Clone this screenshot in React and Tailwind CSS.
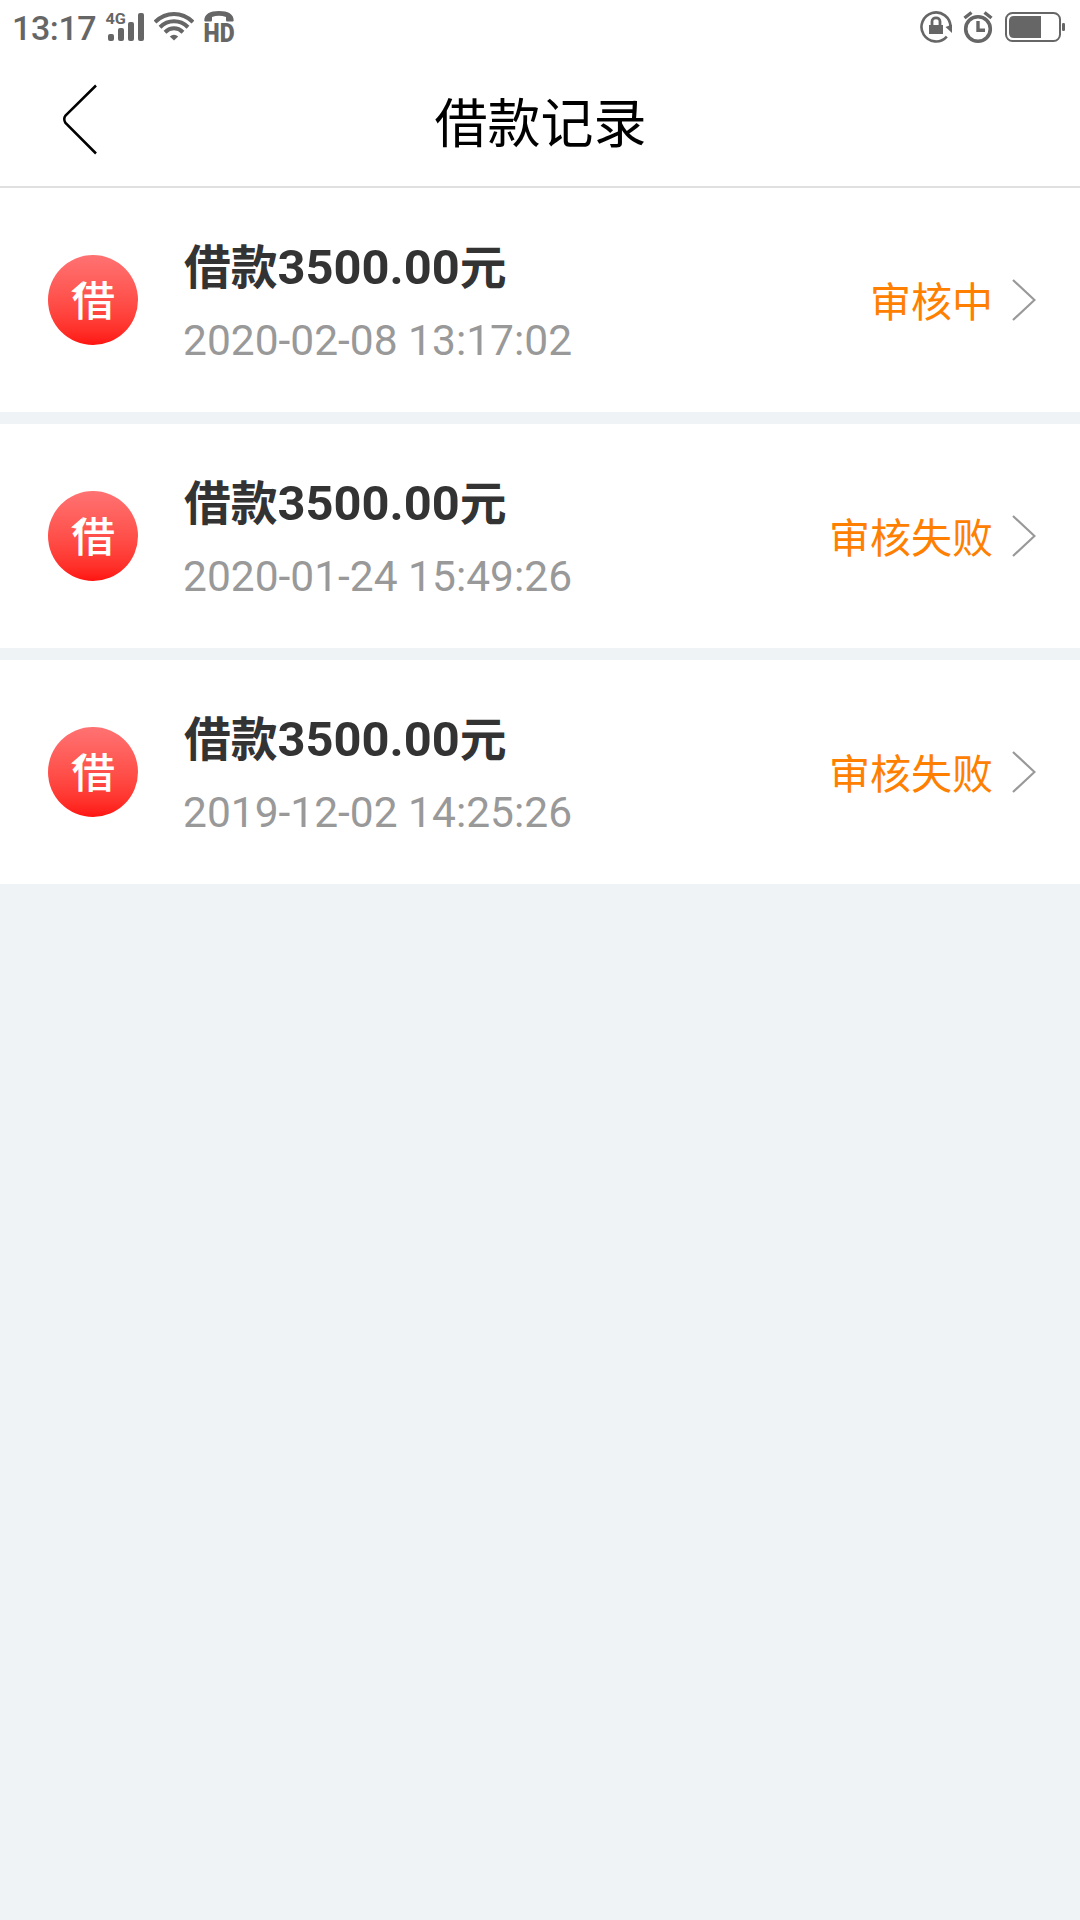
const records = [
  { id: 1, amount: '3500.00', time: '2020-02-08 13:17:02', status: '审核中' },
  { id: 2, amount: '3500.00', time: '2020-01-24 15:49:26', status: '审核失败' },
  { id: 3, amount: '3500.00', time: '2019-12-02 14:25:26', status: '审核失败' }
];

const SignalIcon = () => (
  <svg className="w-[40px] h-[54px]" viewBox="105 0 40 54" fill="currentColor">
    <text x="105.5" y="24" fontSize="15" fontWeight="700" textLength="20.5" lengthAdjust="spacingAndGlyphs">4G</text>
    <rect x="108" y="34" width="6" height="7" rx="2" />
    <rect x="118" y="28" width="6" height="13" rx="2" />
    <rect x="128" y="22" width="6" height="19" rx="2" />
    <rect x="138" y="13" width="6" height="28" rx="2" />
  </svg>
);

const WifiIcon = () => (
  <svg className="w-[40px] h-[54px]" viewBox="154 0 40 54" fill="none" stroke="currentColor" strokeWidth="4">
    <path d="M155 22 C166 11.2 182 11.2 193 22" />
    <path d="M160 27.2 C168 19.4 180 19.4 188 27.2" />
    <path d="M165 32.2 C170.5 27 177.5 27 183 32.2" />
    <path d="M169.8 36.6 Q174 33 178.2 36.6 L174 40.5Z" fill="currentColor" stroke="none" />
  </svg>
);

const HdCallIcon = () => (
  <svg className="w-[40px] h-[54px]" viewBox="200 0 40 54" fill="currentColor">
    <path d="M204.3 20.5 C204.3 14 210 11 219 11 C228 11 233.7 14 233.7 20.5 Q233.7 21.5 232.5 21.5 H227 Q226 21.5 226 20 V17 Q219 14.5 212 17 V20 Q212 21.5 211 21.5 H205.5 Q204.3 21.5 204.3 20.5Z" />
    <text x="203.6" y="42" fontSize="25" fontWeight="900" textLength="31" lengthAdjust="spacingAndGlyphs">HD</text>
  </svg>
);

const RotationLockIcon = () => (
  <svg className="w-[34px] h-[54px]" viewBox="919 0 34 54" fill="none" stroke="currentColor">
    <path d="M950.5 27 A14.5 14.5 0 1 0 946.8 36.6" strokeWidth="2.6" />
    <path d="M945.5 27 L952 24.5 V33Z" fill="currentColor" stroke="none" />
    <rect x="929" y="25" width="14" height="9" fill="currentColor" stroke="none" />
    <path d="M932 25 V21.5 A4 3.7 0 0 1 940 21.5 V25" strokeWidth="2.8" />
  </svg>
);

const AlarmIcon = () => (
  <svg className="w-[30px] h-[54px]" viewBox="963 0 30 54" fill="none" stroke="currentColor">
    <circle cx="978" cy="29" r="12.3" strokeWidth="3.6" />
    <path d="M978 21 V30.3 H985" strokeWidth="3.4" />
    <path d="M964.5 18 L971.5 12.5 M991.5 18 L984.5 12.5" strokeWidth="3.4" />
  </svg>
);

const BatteryIcon = () => (
  <svg className="w-[62px] h-[54px]" viewBox="1004 0 62 54" fill="currentColor">
    <rect x="1006" y="13" width="54" height="28" rx="6.5" fill="none" stroke="currentColor" strokeWidth="2" />
    <path d="M1041 16 V38 H1014 Q1009 38 1009 33 V21 Q1009 16 1014 16Z" />
    <rect x="1062" y="23" width="3" height="8" rx="1.2" />
  </svg>
);

const StatusBar = () => (
  <div className="flex h-[54px] items-center pl-[12px] pr-[14px] text-[#666666]">
    <span className="w-[93px] pt-[2px] text-[34px] font-medium leading-none tracking-[-0.4px]">13:17</span>
    <SignalIcon />
    <div className="ml-[9px]"><WifiIcon /></div>
    <div className="ml-[6px]"><HdCallIcon /></div>
    <div className="ml-auto flex">
      <RotationLockIcon />
      <div className="ml-[10px]"><AlarmIcon /></div>
      <div className="ml-[11px]"><BatteryIcon /></div>
    </div>
  </div>
);

const Header = () => (
  <header className="grid h-[134px] grid-cols-[1fr_auto_1fr] items-center border-b-2 border-[#e0e0e0] text-black">
    <button className="ml-[60px] w-[40px]">
      <svg className="h-[72px] w-[40px]" viewBox="0 0 40 72" fill="none" stroke="currentColor" strokeWidth="2.5">
        <path d="M36 1.5 L5.5 31.5 Q3 35 5.5 39 L36 69.5" />
      </svg>
    </button>
    <h1 className="pl-px pt-[9px] text-[53px] leading-[60px]">借款记录</h1>
  </header>
);

// Round loan mark with the small arrow head on its left stroke
const LoanBadge = () => (
  <div className="relative flex size-[90px] items-center justify-center rounded-full bg-linear-to-b from-[#ff7272] to-[#ff120f]">
    <span className="scale-x-105 pt-[5px] text-[41px] font-medium leading-none text-white">借</span>
    <svg className="absolute left-[22px] top-[27px] h-[14px] w-[13px]" viewBox="0 0 13 14" fill="#ffffff">
      <path d="M12 0 V13 H8 V11 L1 9.5Z" />
    </svg>
  </div>
);

const RecordRow = ({ record }) => (
  <li className="flex h-[224px] items-center bg-white pl-[48px] pr-[44px]">
    <LoanBadge />
    <div className="ml-[45px] flex-1 pt-[4px]">
      <p className="pl-px text-[46.8px] font-bold leading-[60px] text-[#333333]">
        借款<span className="text-[48.8px]">{record.amount}</span>元
      </p>
      <p className="mt-[18px] text-[42.5px] leading-[50px] text-[#999999]">{record.time}</p>
    </div>
    <span className="pt-[5px] text-[41px] leading-[50px] text-[#ff8000]">{record.status}</span>
    <svg className="ml-[19px] h-[44px] w-[24px]" viewBox="0 0 24 44" fill="none" stroke="#999999" strokeWidth="2.2">
      <path d="M1 2 L22.5 22 L1 42" />
    </svg>
  </li>
);

export default function App() {
  return (
    <div className="min-h-screen bg-[#eff3f6] font-[Roboto,'Noto_Sans_CJK_SC',sans-serif]">
      <div className="bg-white">
        <StatusBar />
        <Header />
      </div>
      <ul className="flex flex-col gap-3">
        {records.map((record) => (
          <RecordRow key={record.id} record={record} />
        ))}
      </ul>
    </div>
  );
}
